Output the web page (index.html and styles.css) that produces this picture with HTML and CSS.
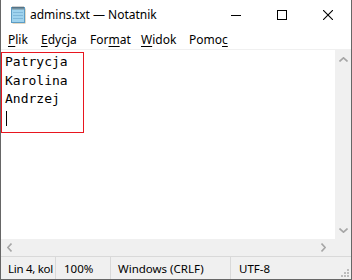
FILE: index.html
```html
<!DOCTYPE html>
<html lang="pl">
<head>
    <meta charset="UTF-8">
    <meta name="viewport" content="width=device-width, initial-scale=1.0">
    <title>admins.txt — Notatnik</title>
    <link rel="stylesheet" href="styles.css">
</head>
<body>
    <div class="window">
        <!-- Title bar -->
        <div class="titlebar">
            <svg class="app-icon" width="17" height="18" viewBox="0 0 17 18">
                <rect x="2.5" y="2.5" width="13" height="15" fill="#c8b48c"/>
                <rect x="1.5" y="1.5" width="13" height="15" fill="#9fd3ee" stroke="#5c9cc4"/>
                <line x1="3" y1="6.5" x2="13" y2="6.5" stroke="#7fb8da"/>
                <line x1="3" y1="9.5" x2="13" y2="9.5" stroke="#7fb8da"/>
                <line x1="3" y1="12.5" x2="13" y2="12.5" stroke="#7fb8da"/>
                <path d="M3 0.5v3M5 0.5v3M7 0.5v3M9 0.5v3M11 0.5v3M13 0.5v3" stroke="#4a4a4a"/>
            </svg>
            <span class="title">admins.txt — Notatnik</span>
            <div class="controls">
                <div class="ctl">
                    <svg width="10" height="10" viewBox="0 0 10 10"><line x1="0" y1="5.5" x2="10" y2="5.5" stroke="#000"/></svg>
                </div>
                <div class="ctl">
                    <svg width="10" height="10" viewBox="0 0 10 10"><rect x="0.5" y="0.5" width="9" height="9" fill="none" stroke="#000"/></svg>
                </div>
                <div class="ctl">
                    <svg width="10" height="10" viewBox="0 0 10 10"><path d="M0 0L10 10M10 0L0 10" stroke="#000" stroke-width="1.1"/></svg>
                </div>
            </div>
        </div>

        <!-- Menu bar -->
        <div class="menubar">
            <span class="menu menu-plik"><u>P</u>lik</span>
            <span class="menu menu-edycja"><u>E</u>dycja</span>
            <span class="menu menu-format">For<u>m</u>at</span>
            <span class="menu menu-widok"><u>W</u>idok</span>
            <span class="menu">Pomo<u>c</u></span>
        </div>

        <!-- Editor -->
        <div class="editor">
            <div class="text-area">
                <div class="highlight">
                    <div class="line">Patrycja</div>
                    <div class="line">Karolina</div>
                    <div class="line">Andrzej</div>
                    <div class="line"><span class="caret"></span></div>
                </div>
            </div>
            <div class="vscroll">
                <svg width="9" height="5" viewBox="0 0 9 5"><path d="M0.5 4.5L4.5 0.8L8.5 4.5" fill="none" stroke="#a6a6a6" stroke-width="1.6"/></svg>
                <svg width="9" height="5" viewBox="0 0 9 5"><path d="M0.5 0.5L4.5 4.2L8.5 0.5" fill="none" stroke="#a6a6a6" stroke-width="1.6"/></svg>
            </div>
        </div>

        <div class="hscroll-row">
            <div class="hscroll">
                <svg width="5" height="9" viewBox="0 0 5 9"><path d="M4.5 0.5L0.8 4.5L4.5 8.5" fill="none" stroke="#a6a6a6" stroke-width="1.6"/></svg>
                <svg width="5" height="9" viewBox="0 0 5 9"><path d="M0.5 0.5L4.2 4.5L0.5 8.5" fill="none" stroke="#a6a6a6" stroke-width="1.6"/></svg>
            </div>
            <div class="corner"></div>
        </div>

        <!-- Status bar -->
        <div class="statusbar">
            <div class="cell cell-pos">Lin 4, kol</div>
            <div class="cell cell-zoom">100%</div>
            <div class="cell cell-eol">Windows (CRLF)</div>
            <div class="cell cell-enc">UTF-8</div>
            <svg class="grip" width="10" height="10" viewBox="0 0 10 10">
                <rect x="7" y="1" width="2" height="2" fill="#bcbcbc"/>
                <rect x="4" y="4" width="2" height="2" fill="#bcbcbc"/>
                <rect x="7" y="4" width="2" height="2" fill="#bcbcbc"/>
                <rect x="1" y="7" width="2" height="2" fill="#bcbcbc"/>
                <rect x="4" y="7" width="2" height="2" fill="#bcbcbc"/>
                <rect x="7" y="7" width="2" height="2" fill="#bcbcbc"/>
            </svg>
        </div>
    </div>
</body>
</html>
```

FILE: styles.css
```css
body {
    margin: 0;
    background: #ffffff;
}

.window {
    width: 352px;
    height: 280px;
    box-sizing: border-box;
    border: 1px solid #666666;
    border-top: none;
    display: flex;
    flex-direction: column;
    font-family: "Noto Sans", "Liberation Sans", sans-serif;
    font-size: 12px;
    color: #000;
    background: #fff;
}

.titlebar {
    height: 30px;
    display: flex;
    align-items: center;
    flex-shrink: 0;
}

.app-icon {
    margin-left: 9px;
    margin-right: 3px;
}

.title {
    flex: 1;
    margin-top: -1px;
}

.controls {
    display: flex;
    height: 30px;
}

.ctl {
    width: 46px;
    display: flex;
    align-items: center;
    justify-content: center;
}

.ctl svg {
    margin-top: -1px;
}

.menubar {
    height: 19px;
    display: flex;
    align-items: center;
    border-bottom: 1px solid #f0f0f0;
    flex-shrink: 0;
}

.menu {
    padding-left: 7px;
    line-height: 19px;
    white-space: nowrap;
    box-sizing: border-box;
}

.menu-plik {
    width: 33px;
}

.menu-edycja {
    width: 49px;
}

.menu-format {
    width: 51px;
}

.menu-widok {
    width: 48px;
}

.menu u {
    text-underline-offset: 2px;
}

.editor {
    flex: 1;
    display: flex;
    min-height: 0;
}

.text-area {
    flex: 1;
    padding-top: 2px;
}

.highlight {
    width: 78px;
    height: 79px;
    border: 1px solid #e8161f;
    padding-left: 3px;
    box-sizing: content-box;
    font-family: "DejaVu Sans Mono", "Liberation Mono", monospace;
    font-size: 13px;
    line-height: 18.5px;
}

.line {
    height: 18.5px;
    white-space: pre;
}

.caret {
    display: inline-block;
    width: 1px;
    height: 15px;
    background: #000;
    margin-left: 1px;
    vertical-align: -4px;
}

.vscroll {
    width: 16px;
    background: #f0f0f0;
    display: flex;
    flex-direction: column;
    justify-content: space-between;
    align-items: center;
    padding: 7px 0 6px;
    box-sizing: border-box;
}

.hscroll-row {
    height: 17px;
    display: flex;
    flex-shrink: 0;
}

.hscroll {
    flex: 1;
    background: #f0f0f0;
    display: flex;
    align-items: center;
    justify-content: space-between;
    padding: 0 9px 0 6px;
}

.corner {
    width: 16px;
    background: #f0f0f0;
}

.statusbar {
    height: 22px;
    display: flex;
    align-items: center;
    background: #f0f0f0;
    border-top: 1px solid #d9d9d9;
    flex-shrink: 0;
    position: relative;
    font-size: 11.5px;
}

.cell {
    height: 100%;
    display: flex;
    align-items: center;
    box-sizing: border-box;
    padding-left: 8px;
    border-right: 1px solid #d9d9d9;
    white-space: nowrap;
    flex-shrink: 0;
}

.cell-pos {
    width: 55px;
    padding-left: 7px;
    letter-spacing: -0.3px;
}

.cell-zoom {
    width: 55px;
}

.cell-eol {
    width: 120px;
    padding-left: 7px;
}

.cell-enc {
    border-right: none;
}

.grip {
    position: absolute;
    right: 1px;
    bottom: 1px;
}
```
